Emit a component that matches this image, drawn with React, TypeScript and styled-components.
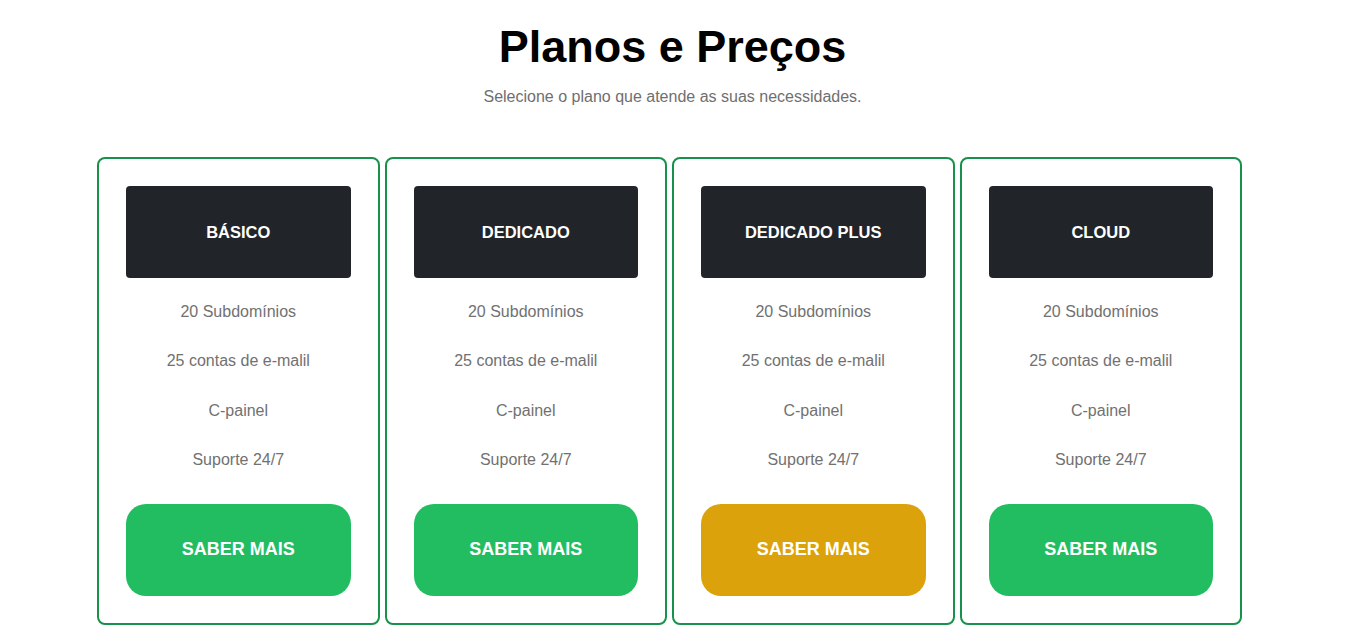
import React from 'react';
import styled, { createGlobalStyle } from 'styled-components';

const GlobalStyle = createGlobalStyle`
	* {
		box-sizing: border-box;
	}

	body {
		margin: 0;
		background: #ffffff;
		font-family: 'Liberation Sans', Arial, sans-serif;
	}
`;

const Page = styled.main`
	display: flex;
	flex-direction: column;
	align-items: center;
	padding-top: 20px;
`;

const Title = styled.h1`
	margin: 0;
	font-size: 45px;
	line-height: 54px;
	font-weight: 700;
	color: #000000;
`;

const Subtitle = styled.p`
	margin: 11px 0 0;
	font-size: 16px;
	line-height: 24px;
	color: #6f6f6f;
`;

/* a bit off center in the original, so it sits 3px left */
const Grid = styled.section`
	display: grid;
	grid-template-columns: repeat(4, 1fr);
	gap: 5px;
	width: 1145px;
	margin: 48px 6px 0 0;
`;

const Card = styled.article`
	display: flex;
	flex-direction: column;
	align-items: stretch;
	padding: 27px;
	border: 2px solid #18914b;
	border-radius: 8px;
`;

const PlanName = styled.div`
	display: flex;
	align-items: center;
	justify-content: center;
	height: 92px;
	border-radius: 4px;
	background-color: #212529;
	color: #ffffff;
	font-size: 16.5px;
	font-weight: 700;
`;

const Features = styled.ul`
	display: flex;
	flex-direction: column;
	gap: 25.3px;
	list-style: none;
	margin: 22px 0 32px;
	padding: 0;
`;

const Feature = styled.li`
	font-size: 16px;
	line-height: 24px;
	text-align: center;
	color: #717171;
`;

const MoreButton = styled.button<{ $highlight?: boolean }>`
	height: 92px;
	border: none;
	border-radius: 20px;
	background-color: ${(p) => (p.$highlight ? '#dca20c' : '#23bd61')};
	color: #ffffff;
	font-family: 'Liberation Sans', Arial, sans-serif;
	font-size: 18px;
	font-weight: 700;
	cursor: pointer;
`;

const plans = [
	{ name: 'BÁSICO', highlight: false },
	{ name: 'DEDICADO', highlight: false },
	{ name: 'DEDICADO PLUS', highlight: true },
	{ name: 'CLOUD', highlight: false },
];

const features = ['20 Subdomínios', '25 contas de e-malil', 'C-painel', 'Suporte 24/7'];

export default function App() {
	return (
		<>
			<GlobalStyle />
			<Page>
				<Title>Planos e Preços</Title>
				<Subtitle>Selecione o plano que atende as suas necessidades.</Subtitle>
				<Grid>
					{plans.map((plan) => (
						<Card key={plan.name}>
							<PlanName>{plan.name}</PlanName>
							<Features>
								{features.map((f) => (
									<Feature key={f}>{f}</Feature>
								))}
							</Features>
							<MoreButton $highlight={plan.highlight}>SABER MAIS</MoreButton>
						</Card>
					))}
				</Grid>
			</Page>
		</>
	);
}
